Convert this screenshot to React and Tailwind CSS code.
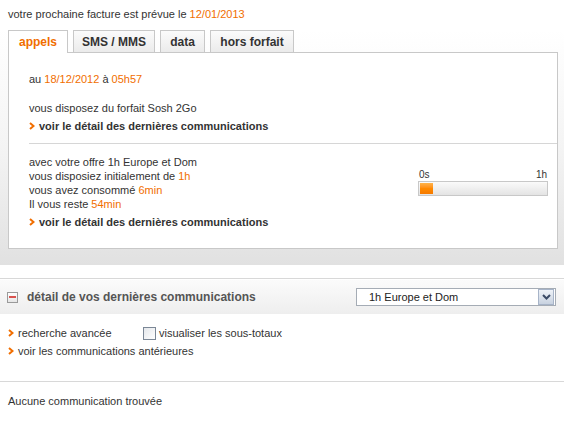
import React from 'react';

const orange = 'text-[#f16e00]';

const Chevron = () => (
  <svg width="6" height="8" viewBox="0 0 6 8" className="shrink-0">
    <path d="M1 1 L4.5 4 L1 7" fill="none" stroke="#f16e00" strokeWidth="2" />
  </svg>
);

const tabs = [
  { label: 'appels', w: 'w-[60px]', active: true },
  { label: 'SMS / MMS', w: 'w-[82px]' },
  { label: 'data', w: 'w-[45px]' },
  { label: 'hors forfait', w: 'w-[84px]' },
];

const DetailLink = () => (
  <div className="flex items-center gap-[4px] mt-[4px] h-[14px] font-bold text-[#333]">
    <Chevron />
    <span>voir le détail des dernières communications</span>
  </div>
);

const Usage = () => (
  <div className="w-[130px] mr-[9px] mt-[14px]">
    <div className="flex justify-between text-[10px] leading-[12px] text-[#333] px-px">
      <span>0s</span>
      <span>1h</span>
    </div>
    <div className="h-[15px] border border-[#c8c8c8] bg-gradient-to-b from-[#fafafa] to-[#e4e4e4] p-px">
      <div className="h-full w-[13px] bg-gradient-to-b from-[#ffb347] via-[#ff8a00] to-[#f57a00]" />
    </div>
  </div>
);

export default function App() {
  return (
    <div className="w-[581px] h-[434px] bg-white text-[11px] leading-[14px] text-[#333] font-['Liberation_Sans',Arial,sans-serif] overflow-hidden">
      <p className="pt-[7px] pl-[8px]">
        votre prochaine facture est prévue le <span className={orange}>12/01/2013</span>
      </p>

      {/* consumption tabs */}
      <div className="mt-[9px] w-[564px] bg-gradient-to-b from-white via-[#f4f4f4] to-[#e1e1e1] pl-[8px] pr-[6px] pb-[16px]">
        <div className="flex gap-[5px] items-end h-[22px]">
          {tabs.map((t) =>
            t.active ? (
              <div key={t.label} className={`${t.w} h-[23px] -mb-px relative z-10 bg-white border border-[#c8c8c8] border-b-0 flex items-center justify-center font-bold text-[12px] ${orange}`}>
                {t.label}
              </div>
            ) : (
              <div key={t.label} className={`${t.w} h-[22px] bg-gradient-to-b from-[#fbfbfb] to-[#ebebeb] border border-[#c8c8c8] border-b-0 flex items-center justify-center font-bold text-[12px] text-[#333]`}>
                {t.label}
              </div>
            )
          )}
        </div>

        <div className="bg-white border border-[#c8c8c8]">
          <div className="pl-[20px] pt-[19px] pb-[10px]">
            <p>
              au <span className={orange}>18/12/2012</span> à <span className={orange}>05h57</span>
            </p>
            <p className="mt-[15px]">vous disposez du forfait Sosh 2Go</p>
            <DetailLink />
          </div>
          <div className="ml-[20px] border-t border-[#d6d6d6]" />
          <div className="pl-[20px] pt-[11px] pb-[19px]">
            <div className="flex justify-between">
              <div>
                <p>avec votre offre 1h Europe et Dom</p>
                <p>vous disposiez initialement de <span className={orange}>1h</span></p>
                <p>vous avez consommé <span className={orange}>6min</span></p>
                <p>Il vous reste <span className={orange}>54min</span></p>
              </div>
              <Usage />
            </div>
            <DetailLink />
          </div>
        </div>
      </div>

      {/* call history */}
      <div className="mt-[13px] w-[564px] border-t border-[#d8d8d8]">
        <div className="h-[34px] mt-px bg-gradient-to-b from-[#fbfbfb] to-[#eeeeee] flex items-center pl-[7px] pr-[8px]">
          <div className="w-[11px] h-[11px] border border-[#9a9a9a] bg-gradient-to-b from-white to-[#e6e6e6] flex items-center justify-center">
            <div className="w-[7px] h-[2px] bg-[#d9534f]" />
          </div>
          <span className="ml-[9px] font-bold text-[12px] text-[#555]">détail de vos dernières communications</span>
          <div className="ml-auto w-[200px] h-[18px] border border-[#a5acb5] bg-white flex items-center">
            <span className="pl-[12px] flex-1 text-[11px] text-[#222]">1h Europe et Dom</span>
            <div className="w-[16px] h-[16px] mr-px border border-[#a7b4c8] bg-gradient-to-b from-[#eef2f8] to-[#c8d2e0] flex items-center justify-center">
              <svg width="9" height="6" viewBox="0 0 9 6">
                <path d="M1 1 L4.5 4.5 L8 1" fill="none" stroke="#3a4a66" strokeWidth="2" />
              </svg>
            </div>
          </div>
        </div>

        <div className="pl-[8px] pt-[12px]">
          <div className="flex items-center h-[14px]">
            <div className="w-[135px] flex items-center gap-[4px]">
              <Chevron />
              <span>recherche avancée</span>
            </div>
            <div className="w-[13px] h-[13px] border border-[#7b8796] bg-gradient-to-br from-[#e4e7eb] to-white" />
            <span className="ml-[3px]">visualiser les sous-totaux</span>
          </div>
          <div className="flex items-center gap-[4px] h-[14px] mt-[4px]">
            <Chevron />
            <span>voir les communications antérieures</span>
          </div>
        </div>

        <div className="mt-[23px] border-t border-[#d8d8d8] pl-[8px] pt-[12px]">
          <p>Aucune communication trouvée</p>
        </div>
      </div>
    </div>
  );
}
